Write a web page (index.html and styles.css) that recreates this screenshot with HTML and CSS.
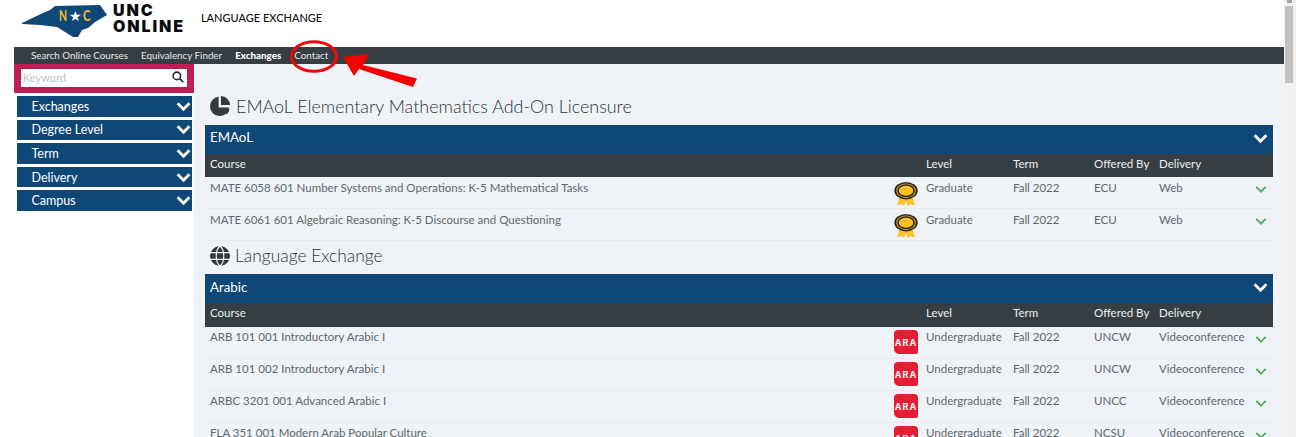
FILE: index.html
```html
<!DOCTYPE html>
<html lang="en">
<head>
<meta charset="utf-8">
<title>Language Exchange</title>
<link rel="stylesheet" href="styles.css">
</head>
<body>
<div class="window">
<div class="page">
  <header class="top">
    <svg class="state" viewBox="0 0 85 33" width="85" height="33">
      <path class="state-fill" d="M0 18 L21 8 L28 5 L33 1 L78 0 L85 10 L73 17 L66 23 L60 25 L56 32 L51 32 L35 22 L18 20 L0 19 Z"/>
      <text class="state-letter" x="37" y="16" textLength="8" lengthAdjust="spacingAndGlyphs">N</text>
      <text class="state-star" x="47" y="16">★</text>
      <text class="state-letter" x="61" y="16" textLength="7.5" lengthAdjust="spacingAndGlyphs">C</text>
    </svg>
    <div class="wordmark"><span>UNC</span><span>ONLINE</span></div>
    <div class="site-title">LANGUAGE EXCHANGE</div>
  </header>
  <nav class="nav">
    <a>Search Online Courses</a>
    <a>Equivalency Finder</a>
    <a class="active">Exchanges</a>
    <a>Contact</a>
  </nav>
  <div class="annotation">
    <svg viewBox="0 0 140 50" width="140" height="50">
      <ellipse class="ring" cx="25" cy="16.5" rx="22.5" ry="14.8"/>
      <path class="arrow" d="M54 17 L80 14 L74 25 L128 38.5 L124 47 L70 29 L65 36 Z"/>
    </svg>
  </div>
  <div class="columns">
    <aside class="side">
      <div class="search"><div class="search-box"><span>Keyword</span>
        <svg viewBox="0 0 16 16" width="12" height="12"><circle cx="6.5" cy="6.5" r="5" class="glass"/><path class="glass" d="M10.5 10.5 L15 15"/></svg>
      </div></div>
      <div class="filters">
        <div class="filter">Exchanges<svg class="chev" viewBox="0 0 14 10"><path d="M1.5 2 L7 7.5 L12.5 2"/></svg></div>
        <div class="filter">Degree Level<svg class="chev" viewBox="0 0 14 10"><path d="M1.5 2 L7 7.5 L12.5 2"/></svg></div>
        <div class="filter">Term<svg class="chev" viewBox="0 0 14 10"><path d="M1.5 2 L7 7.5 L12.5 2"/></svg></div>
        <div class="filter">Delivery<svg class="chev" viewBox="0 0 14 10"><path d="M1.5 2 L7 7.5 L12.5 2"/></svg></div>
        <div class="filter">Campus<svg class="chev" viewBox="0 0 14 10"><path d="M1.5 2 L7 7.5 L12.5 2"/></svg></div>
      </div>
    </aside>
    <main class="content">
      <h2 class="heading first">
        <svg viewBox="0 0 24 24" width="22" height="22"><path class="dark" d="M10.5 2 A10.5 10.5 0 1 0 22 13.5 L10.5 13.5 Z"/><path class="dark" d="M13 1 A10.5 10.5 0 0 1 23 11 L13 11 Z"/><path class="dark" d="M14 15.5 L22.5 15.5 A10.5 10.5 0 0 1 19.5 21 Z"/></svg>
        EMAoL Elementary Mathematics Add-On Licensure
      </h2>
      <section>
        <div class="band">EMAoL<svg class="chev big" viewBox="0 0 14 10"><path d="M1.5 2 L7 7.5 L12.5 2"/></svg></div>
        <div class="row head"><span class="c-course">Course</span><span class="c-level">Level</span><span class="c-term">Term</span><span class="c-by">Offered By</span><span class="c-del">Delivery</span></div>
        <div class="row"><span class="c-course">MATE 6058 601 Number Systems and Operations: K-5 Mathematical Tasks</span><span class="c-icon"><svg class="medal" viewBox="0 0 24 24" width="24" height="24"><use href="#medal"/></svg></span><span class="c-level">Graduate</span><span class="c-term">Fall 2022</span><span class="c-by">ECU</span><span class="c-del">Web</span><svg class="tick" viewBox="0 0 14 10"><path d="M1.5 2 L7 7.5 L12.5 2"/></svg></div>
        <div class="row"><span class="c-course">MATE 6061 601 Algebraic Reasoning: K-5 Discourse and Questioning</span><span class="c-icon"><svg class="medal" viewBox="0 0 24 24" width="24" height="24"><use href="#medal"/></svg></span><span class="c-level">Graduate</span><span class="c-term">Fall 2022</span><span class="c-by">ECU</span><span class="c-del">Web</span><svg class="tick" viewBox="0 0 14 10"><path d="M1.5 2 L7 7.5 L12.5 2"/></svg></div>
      </section>
      <h2 class="heading second">
        <svg viewBox="0 0 20 20" width="20" height="20"><circle class="dark" cx="10" cy="10" r="10"/><path class="globe-line" d="M0 6.7 H20 M0 13.3 H20 M10 0 C5 4 5 16 10 20 C15 16 15 4 10 0"/></svg>
        Language Exchange
      </h2>
      <section>
        <div class="band">Arabic<svg class="chev big" viewBox="0 0 14 10"><path d="M1.5 2 L7 7.5 L12.5 2"/></svg></div>
        <div class="row head"><span class="c-course">Course</span><span class="c-level">Level</span><span class="c-term">Term</span><span class="c-by">Offered By</span><span class="c-del">Delivery</span></div>
        <div class="row"><span class="c-course">ARB 101 001 Introductory Arabic I</span><span class="c-icon"><span class="lang">ARA</span></span><span class="c-level">Undergraduate</span><span class="c-term">Fall 2022</span><span class="c-by">UNCW</span><span class="c-del">Videoconference</span><svg class="tick" viewBox="0 0 14 10"><path d="M1.5 2 L7 7.5 L12.5 2"/></svg></div>
        <div class="row"><span class="c-course">ARB 101 002 Introductory Arabic I</span><span class="c-icon"><span class="lang">ARA</span></span><span class="c-level">Undergraduate</span><span class="c-term">Fall 2022</span><span class="c-by">UNCW</span><span class="c-del">Videoconference</span><svg class="tick" viewBox="0 0 14 10"><path d="M1.5 2 L7 7.5 L12.5 2"/></svg></div>
        <div class="row"><span class="c-course">ARBC 3201 001 Advanced Arabic I</span><span class="c-icon"><span class="lang">ARA</span></span><span class="c-level">Undergraduate</span><span class="c-term">Fall 2022</span><span class="c-by">UNCC</span><span class="c-del">Videoconference</span><svg class="tick" viewBox="0 0 14 10"><path d="M1.5 2 L7 7.5 L12.5 2"/></svg></div>
        <div class="row"><span class="c-course">FLA 351 001 Modern Arab Popular Culture</span><span class="c-icon"><span class="lang">ARA</span></span><span class="c-level">Undergraduate</span><span class="c-term">Fall 2022</span><span class="c-by">NCSU</span><span class="c-del">Videoconference</span><svg class="tick" viewBox="0 0 14 10"><path d="M1.5 2 L7 7.5 L12.5 2"/></svg></div>
      </section>
    </main>
  </div>
</div>
<div class="scrollbar"><div class="scroll-up"></div><div class="scroll-thumb"></div></div>
</div>
<svg class="defs" width="0" height="0">
  <symbol id="medal" viewBox="0 0 24 24">
    <path fill="#fdbe26" d="M6 14 L3 23.5 L7.5 22 L10 24 L12 19 L14 24 L16.5 22 L21 23.5 L18 14 Z"/>
    <ellipse cx="12" cy="8.7" rx="11.7" ry="8.7" fill="#2b2a26"/>
    <ellipse cx="12" cy="8.7" rx="9.8" ry="7.2" fill="#d9a124"/>
    <ellipse cx="12" cy="8.7" rx="8.8" ry="6.4" fill="#2b2a26"/>
    <ellipse cx="12" cy="8.7" rx="7.2" ry="5" fill="#fdbe26"/>
  </symbol>
</svg>
</body>
</html>
```
FILE: styles.css
```css
* { box-sizing: border-box; }
html, body { margin: 0; height: 100%; overflow: hidden; background: #fff; }
body { font-family: "Lato", "Open Sans", sans-serif; color: #33393d; }
.window { display: flex; height: 437px; }
.page { flex: 1; min-width: 0; position: relative; padding-left: 14px; }
.top { height: 47px; display: flex; align-items: flex-start; padding: 5px 0 0 8px; }
.state { flex: none; }
.state-fill { fill: #0f4776; }
.state-letter { fill: #f7c11f; font: 700 15px "Lato", sans-serif; }
.state-star { fill: #fff; font: 14px "DejaVu Sans", sans-serif; }
.wordmark { display: flex; flex-direction: column; margin: -2px 0 0 6px; font: 900 16px/15.5px "Inter", "Lato", sans-serif; letter-spacing: 1.9px; color: #0b0b0b; }
.site-title { margin: 6px 0 0 16px; font-size: 11px; line-height: 14px; color: #111; font-weight: 500; }
.nav { height: 16.5px; background: #373e43; display: flex; padding-left: 17px; gap: 13px; font-size: 9.8px; line-height: 17px; color: #e4e7ea; }
.nav .active { font-weight: 900; color: #fff; }
.annotation { position: absolute; left: 289px; top: 40px; line-height: 0; }
.ring { fill: none; stroke: #ee0a0a; stroke-width: 3; }
.arrow { fill: #f40000; }
.columns { display: flex; height: 373.5px; overflow: hidden; }
.side { width: 180px; flex: none; }
.search { height: 29.5px; background: #bd2053; padding: 5.5px 7px; }
.search-box { height: 18px; background: #fff; display: flex; align-items: center; justify-content: space-between; padding: 0 3px 2px 2px; font-size: 11px; color: #bcc4ca; }
.glass { fill: none; stroke: #23272a; stroke-width: 2.2; }
.filters { padding: 3px 2px 0 3px; display: flex; flex-direction: column; gap: 2.9px; }
.filter { height: 20.7px; background: #0f4776; color: #fff; font-size: 12.5px; line-height: 21px; padding-left: 14.5px; display: flex; justify-content: space-between; align-items: center; }
.chev { width: 15px; height: 11px; margin-right: 1.5px; flex: none; }
.chev path { fill: none; stroke: #fff; stroke-width: 2.6; }
.chev.big { margin: 2px 5px 0 0; }
.content { flex: 1; min-width: 0; background: #eff3f7; padding: 0 11px; }
.heading { margin: 0; display: flex; align-items: center; gap: 5px; font-weight: 300; color: #2c3236; }
.heading.first { height: 61px; padding: 24px 0 0 4px; font-size: 17.9px; }
.heading.second { height: 33px; padding: 0 0 4px 5px; font-size: 17.4px; }
.band { height: 29px; background: #0f4776; color: #fff; font-size: 13.3px; display: flex; align-items: center; justify-content: space-between; padding: 0 0 4px 5px; }
.row { display: flex; position: relative; height: 32px; font-size: 11.5px; line-height: 14px; padding: 3.5px 0 0 5px; color: #5f676c; border-bottom: 1px solid #e7ebef; }
.row.head { height: 23.5px; background: #373e43; color: #eceff1; padding-top: 3px; border: 0; }
.c-course { flex: 1; min-width: 0; }
.c-icon { width: 32px; flex: none; }
.medal { display: block; margin-top: 1px; }
.c-level { width: 87px; flex: none; }
.c-term { width: 81px; flex: none; }
.c-by { width: 65px; flex: none; }
.c-del { width: 114px; flex: none; }
.tick { position: absolute; right: 6px; top: 8px; width: 12px; height: 9px; }
.tick path { fill: none; stroke: #4cb050; stroke-width: 2.2; }
.lang { display: flex; width: 24px; height: 24px; align-items: center; justify-content: center; background: #e71d36; color: #fff; font: 700 9px "Inter", "Lato", sans-serif; letter-spacing: 1px; white-space: nowrap; border-radius: 4px 4px 2px 5px; }
.dark { fill: #33393d; }
.globe-line { fill: none; stroke: #eff3f7; stroke-width: 1.2; }
.scrollbar { width: 12px; flex: none; background: #f1f1f1; }
.scroll-up { height: 5.5px; display: flex; justify-content: center; }
.scroll-up::before { content: ""; width: 5px; height: 2.5px; margin-left: -2px; background: #a3a3a3; }
.scroll-thumb { height: 77.5px; margin: 0 3px 0 1px; background: #c1c1c1; }
.defs { position: absolute; }
```
